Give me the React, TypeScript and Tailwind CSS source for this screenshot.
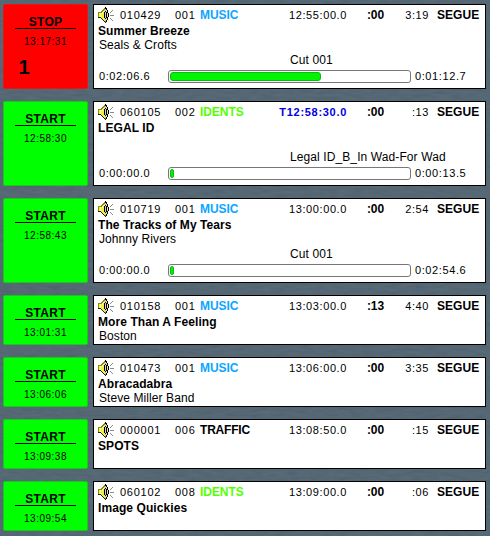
import React from "react";

type Item = {
  id: string;
  group: string;
  category: string;
  tone: string;
  time: string;
  hard?: boolean;
  talk: string;
  length: string;
  title: string;
  artist?: string;
  button: string;
  clock: string;
  deck?: string;
  cut?: { name: string; elapsed: string; remaining: string; progress: number };
};

const BLUE = "text-[#0ca5ff]";
const GREEN = "text-[#55ff00]";

const items: Item[] = [
  { id: "010429", group: "001", category: "MUSIC", tone: BLUE, time: "12:55:00.0", talk: ":00", length: "3:19", title: "Summer Breeze", artist: "Seals & Crofts", button: "STOP", clock: "13:17:31", deck: "1", cut: { name: "Cut 001", elapsed: "0:02:06.6", remaining: "0:01:12.7", progress: 151 } },
  { id: "060105", group: "002", category: "IDENTS", tone: GREEN, time: "T12:58:30.0", hard: true, talk: ":00", length: ":13", title: "LEGAL ID", button: "START", clock: "12:58:30", cut: { name: "Legal ID_B_In Wad-For Wad", elapsed: "0:00:00.0", remaining: "0:00:13.5", progress: 4 } },
  { id: "010719", group: "001", category: "MUSIC", tone: BLUE, time: "13:00:00.0", talk: ":00", length: "2:54", title: "The Tracks of My Tears", artist: "Johnny Rivers", button: "START", clock: "12:58:43", cut: { name: "Cut 001", elapsed: "0:00:00.0", remaining: "0:02:54.6", progress: 4 } },
  { id: "010158", group: "001", category: "MUSIC", tone: BLUE, time: "13:03:00.0", talk: ":13", length: "4:40", title: "More Than A Feeling", artist: "Boston", button: "START", clock: "13:01:31" },
  { id: "010473", group: "001", category: "MUSIC", tone: BLUE, time: "13:06:00.0", talk: ":00", length: "3:35", title: "Abracadabra", artist: "Steve Miller Band", button: "START", clock: "13:06:06" },
  { id: "000001", group: "006", category: "TRAFFIC", tone: "text-black", time: "13:08:50.0", talk: ":00", length: ":15", title: "SPOTS", button: "START", clock: "13:09:38" },
  { id: "060102", group: "008", category: "IDENTS", tone: GREEN, time: "13:09:00.0", talk: ":00", length: ":06", title: "Image Quickies", button: "START", clock: "13:09:54" },
];

function Speaker() {
  return (
    <svg viewBox="0 0 16 16" className="size-4 shrink-0" shapeRendering="crispEdges">
      {/* cabinet and cone */}
      <path d="M0 5h3v-1h1v-1h1v-1h1v-1h1v-1h1v16h-1v-1h-1v-1h-1v-1h-1v-1h-1v-1h-3z" fill="#8a8a10" />
      <path d="M1 6h3v-1h1v-1h1v-1h1v11h-1v-1h-1v-1h-1v-1h-3z" fill="#f5f03a" />
      <path d="M2 6h1v4h-1zM4 5h1v2h-1zM5 4h1v1h-1z" fill="#fffbd0" />
      <path d="M0 10h3v1h-3zM3 11h1v1h-1zM4 12h1v1h-1zM5 13h1v1h-1zM6 14h1v1h-1zM7 15h1v1h-1z" fill="#222" />
      {/* speaker face */}
      <path d="M7 2h1v12h-1z" fill="#c9c9c9" />
      <path d="M7 0h1v2h-1zM8 1h1v2h-1zM9 3h1v3h-1zM10 6h1v4h-1zM9 10h1v3h-1zM8 13h1v2h-1zM6 5h1v6h-1zM7 4h1v1h-1zM7 11h1v1h-1zM8 5h1v6h-1z" fill="#000" />
      <path d="M8 3h1v2h-1zM9 6h1v4h-1zM8 11h1v2h-1z" fill="#e8e4a0" />
      {/* sound waves */}
      <path d="M12 5h1v-1h1v-1h1v1h-1v1h-1v1h-1zM12 8h4v1h-4zM12 11h1v1h1v1h1v1h-1v-1h-1v-1h-1z" fill="#8c8c8c" />
    </svg>
  );
}

function CueButton({ item }: { item: Item }) {
  const stop = item.button === "STOP";
  return (
    <button
      className={
        "flex w-[85px] shrink-0 flex-col items-center rounded-[2px] border pt-[11px] " +
        (stop ? "border-[#e01818] bg-[#ff0000]" : "border-[#18c818] bg-[#00ff00]")
      }
    >
      <span className="h-3 text-[12px] leading-3 font-bold tracking-[0.3px]">{item.button}</span>
      <span className="h-px w-[61px] bg-black" />
      <span className="mt-[7px] h-3 text-[10px] leading-3 tracking-[0.5px]">{item.clock}</span>
      {item.deck && <span className="mt-[9px] mr-[43px] text-[20px] leading-5 font-bold">{item.deck}</span>}
    </button>
  );
}

function Progress({ value }: { value: number }) {
  return (
    <div className="mr-[4px] h-[13px] w-[243px] rounded-[3px] border border-[#777] bg-white p-px">
      <div className="h-[9px] rounded-[3px] border border-[#12b812] bg-[#00f500]" style={{ width: value }} />
    </div>
  );
}

function Row({ item }: { item: Item }) {
  return (
    <div className={"flex gap-[5px] " + (item.cut ? "h-[85px]" : "h-[50px]")}>
      <CueButton item={item} />
      <section className="flex w-[393px] flex-col border border-black bg-white pl-1 text-[11px] whitespace-nowrap">
        <div className="mt-0.5 flex h-4 items-center leading-4">
          <Speaker />
          <span className="ml-[6px] w-[55px] tracking-[0.75px]">{item.id}</span>
          <span className="w-[25px] tracking-[0.75px]">{item.group}</span>
          <span className={"w-[64px] text-[12px] font-bold " + (item.category === "TRAFFIC" ? "tracking-[-0.2px] " : "tracking-[-0.05px] ") + item.tone}>{item.category}</span>
          <span className={"flex w-[83px] justify-end " + (item.hard ? "font-bold tracking-[0.7px] text-[#0000e0]" : "tracking-[0.6px]")}>{item.time}</span>
          <span className="flex w-[37px] justify-end text-[12px] font-bold tracking-[-0.1px]">{item.talk}</span>
          <span className="flex w-[45px] justify-end tracking-[0.6px]">{item.length}</span>
          <span className="ml-2 text-[12px] font-bold tracking-[0.05px]">SEGUE</span>
        </div>
        <div className="h-[15px] text-[12px] leading-[16px] font-bold tracking-[0.08px]">{item.title}</div>
        <div className="h-[14px] pl-px text-[12px] leading-[14px] tracking-[0.08px]">{item.artist}</div>
        {item.cut && (
          <>
            <div className="h-[15px] pl-[192px] text-[12px] leading-[17px] tracking-[0.1px]">{item.cut.name}</div>
            <div className="mt-[2px] flex h-[15px] items-center pl-px">
              <span className="w-[69px] tracking-[0.6px]">{item.cut.elapsed}</span>
              <Progress value={item.cut.progress} />
              <span className="tracking-[0.6px]">{item.cut.remaining}</span>
            </div>
          </>
        )}
      </section>
    </div>
  );
}

export default function App() {
  return (
    <main className="relative h-[536px] w-[490px] overflow-hidden bg-[#4a5e6c] font-['Liberation_Sans',Arial,sans-serif] text-black">
      <svg className="absolute inset-0 size-full opacity-10" aria-hidden="true">
        <filter id="slate">
          <feTurbulence type="fractalNoise" baseFrequency="0.08 0.35" numOctaves="3" seed="4" />
          <feColorMatrix type="saturate" values="0" />
          <feColorMatrix values="1 0 0 0 0 1 0 0 0 0 1 0 0 0 0 0 0 0 0 1" />
        </filter>
        <rect width="100%" height="100%" filter="url(#slate)" />
      </svg>
      <div className="relative flex flex-col gap-3 pt-1 pl-[3px]">
        {items.map((item) => (
          <Row key={item.id} item={item} />
        ))}
      </div>
    </main>
  );
}
